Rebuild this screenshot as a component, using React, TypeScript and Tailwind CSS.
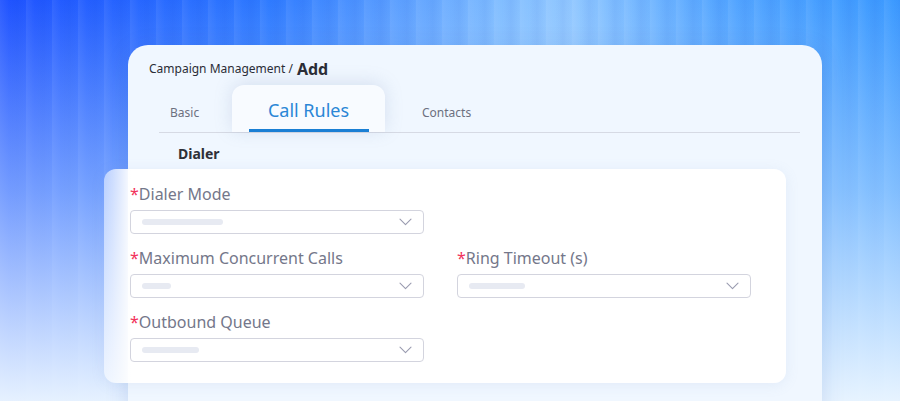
type Field = { label: string; bar: number };

function Chevron() {
  return (
    <svg width="13" height="8" viewBox="0 0 13 8" fill="none" className="text-[#9a9cb0]">
      <path d="M1 1.2L6.5 6.6L12 1.2" stroke="currentColor" strokeWidth="1.1" strokeLinecap="round" strokeLinejoin="round" />
    </svg>
  );
}

function SelectField({ label, bar }: Field) {
  return (
    <div className="w-[294px]">
      <div className="h-[20px] leading-[20px] text-[16px] text-[#74778a] mb-[6px] whitespace-nowrap">
        <span className="text-[#f2325c]">*</span>
        {label}
      </div>
      <div className="h-[24px] rounded-[4px] border border-[#d3d4de] bg-white flex items-center justify-between pl-[11px] pr-[11px]">
        <div className="h-[6px] rounded-full bg-[#e7eaf2]" style={{ width: bar }} />
        <Chevron />
      </div>
    </div>
  );
}

export default function App() {
  return (
    <div
      className="w-[900px] h-[401px] overflow-hidden pt-[45px] bg-[linear-gradient(to_bottom,rgba(255,255,255,0)_0%,rgba(200,228,255,0.5)_48%,rgba(236,246,255,0.97)_100%),repeating-linear-gradient(90deg,rgba(255,255,255,0.07)_0px,rgba(255,255,255,0)_9px,rgba(0,50,200,0.06)_17px,rgba(255,255,255,0)_26px),linear-gradient(90deg,#1f52ff_0%,#2f7bff_30%,#7fbcff_55%,#92c8ff_63%,#55a6ff_80%,#3c9aff_100%)]"
      style={{ fontFamily: '"Noto Sans", "Open Sans", sans-serif' }}
    >
      <div className="ml-[128px] w-[694px] h-[400px] rounded-t-[20px] bg-[#f0f7ff] shadow-[0_4px_24px_rgba(20,60,160,0.12)]">
        {/* Breadcrumb */}
        <div className="pt-[8px] pl-[21px] h-[40px] flex items-center gap-[4px] text-[#2b2d36]">
          <span className="text-[12px]">Campaign Management /</span>
          <span className="text-[16px] font-bold">Add</span>
        </div>

        {/* Tabs */}
        <div className="ml-[31px] mr-[22px] h-[48px] border-b border-[#d6dae4] flex items-end">
          <div className="w-[73px] h-full flex items-center pl-[11px] pt-[8px] text-[12px] text-[#6c7080]">
            Basic
          </div>
          <div className="relative w-[153px] h-full rounded-t-[12px] bg-[#f8fbff] shadow-[0_-2px_18px_rgba(120,140,180,0.22)] flex items-center justify-center pt-[3px] text-[18px] text-[#2a86d6]">
            Call Rules
            <div className="absolute left-[17px] right-[16px] bottom-0 h-[3px] bg-[#1a7fd4]" />
          </div>
          <div className="h-full flex items-center pl-[37px] pt-[8px] text-[12px] text-[#6c7080]">
            Contacts
          </div>
        </div>

        {/* Section title */}
        <div className="pl-[50px] pt-[11px] h-[36px] leading-[20px] text-[14px] font-bold text-[#2e3038]">
          Dialer
        </div>

        {/* Form card */}
        <div className="-ml-[24px] w-[682px] h-[214px] rounded-[12px] bg-[linear-gradient(to_right,rgba(255,255,255,0.5)_0px,#ffffff_28px)] shadow-[0_2px_14px_rgba(120,150,200,0.12)] pt-[15px] pl-[26px]">
          <div className="grid grid-cols-[294px_294px] gap-x-[33px] gap-y-[14px]">
            <SelectField label="Dialer Mode" bar={81} />
            <div />
            <SelectField label="Maximum Concurrent Calls" bar={29} />
            <SelectField label="Ring Timeout (s)" bar={56} />
            <SelectField label="Outbound Queue" bar={57} />
          </div>
        </div>
      </div>
    </div>
  );
}
